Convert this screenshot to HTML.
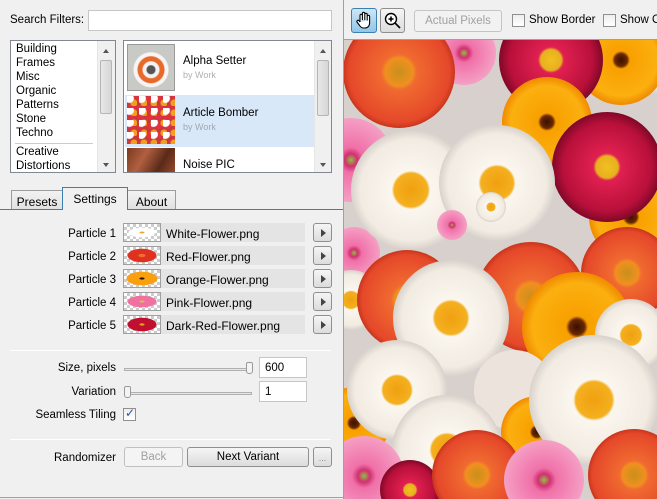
<!DOCTYPE html>
<html><head><meta charset="utf-8"><style>
*{box-sizing:border-box}
body{margin:0;width:657px;height:499px;background:#f0f0f0;font-family:"Liberation Sans",sans-serif;font-size:11px;color:#000;position:relative;overflow:hidden}
.a{position:absolute}
.box{position:absolute;background:#fff;border:1px solid #adadad}
.li{position:absolute;left:5px;font-size:11.5px}
.sb{position:absolute;background:#f0f0f0;border-left:1px solid #e6e6e6}
.thumbv{position:absolute;left:2px;width:12px;background:linear-gradient(90deg,#e8e8e8,#d6d6d6);border:1px solid #b5b5b5;border-radius:2px}
.lab{position:absolute;width:110px;text-align:right;left:6px;font-size:11.5px}
.tb{position:absolute;left:123px;width:38px;height:19px;border:1px solid #a0a0a0;background:repeating-conic-gradient(#ccc 0 25%,#fff 0 50%) 0 0/6px 6px}
.fn{position:absolute;left:161px;width:144px;height:19px;background:#e4e4e4;padding:4px 5px 0;font-size:12px}
.btn{position:absolute;border:1px solid #8e8f8f;border-radius:3px;background:linear-gradient(#f5f5f5,#dcdcdc);text-align:center}
.arr{position:absolute;left:313px;width:19px;height:19px}
.arr:after{content:"";position:absolute;left:7px;top:5px;border-left:5px solid #444;border-top:4px solid transparent;border-bottom:4px solid transparent}
.hr{position:absolute;left:10px;width:321px;height:1px;background:#a0a0a0;border-bottom:1px solid #fff}
.inp{position:absolute;left:259px;width:48px;height:21px;background:#fff;border:1px solid #c6c6c6;padding:4px 5px;font-size:11.5px}
.tab{position:absolute;top:190px;height:20px;border:1px solid #9c9c9c;border-bottom:none;background:linear-gradient(#f2f2f2,#e0e0e0);text-align:center;padding-top:4px;font-size:12px}
.cb{position:absolute;width:13px;height:13px;border:1px solid #8f8f8f;background:linear-gradient(#eee,#fff)}
</style></head><body>
<div class="a" style="left:10px;top:14px;font-size:11.5px">Search Filters:</div>
<div class="box" style="left:88px;top:10px;width:244px;height:21px;border-color:#c6c6c6"></div>

<div class="box" style="left:10px;top:40px;width:106px;height:133px;border-color:#828790">
 <div class="li" style="top:2px">Building</div><div class="li" style="top:16px">Frames</div><div class="li" style="top:30px">Misc</div><div class="li" style="top:44px">Organic</div><div class="li" style="top:58px">Patterns</div><div class="li" style="top:72px">Stone</div><div class="li" style="top:86px">Techno</div>
 <div class="a" style="left:4px;top:102px;width:78px;height:1px;background:#ccc"></div>
 <div class="li" style="top:105px">Creative</div><div class="li" style="top:119px">Distortions</div>
 <div class="sb" style="left:86px;top:0;width:18px;height:131px"><div class="a" style="left:5px;top:8px;border-bottom:4px solid #555;border-left:3px solid transparent;border-right:3px solid transparent"></div><div class="thumbv" style="top:19px;height:54px"></div><div class="a" style="left:5px;top:122px;border-top:4px solid #555;border-left:3px solid transparent;border-right:3px solid transparent"></div></div>
</div>

<div class="box" style="left:123px;top:40px;width:209px;height:133px;border-color:#828790;overflow:hidden">
 <div class="a" style="left:3px;top:3px;width:48px;height:47px;background:radial-gradient(circle at 50% 55%,#555 0 4px,#f2f2f2 5px 8px,#e8692a 9px 13px,#f5f5f5 14px 17px,#c9cac6 18px),#cfd0cc;border:1px solid #999"></div>
 <div class="a" style="left:59px;top:14px;font-size:11.5px">Alpha Setter</div><div class="a" style="left:59px;top:29px;font-size:9px;color:#b0b0b0">by Work</div>
 <div class="a" style="left:1px;top:54px;width:189px;height:52px;background:#d9e8f9"></div>
 <div class="a" style="left:3px;top:55px;width:48px;height:48px;background:radial-gradient(circle at 20% 20%,#fff 0 4px,transparent 5px) 0 0/12px 12px,radial-gradient(circle at 70% 70%,#f0a020 0 3px,transparent 4px) 0 0/10px 10px,radial-gradient(circle at 50% 30%,#e23040 0 3px,transparent 4px) 0 0/9px 9px,#c73a3a"></div>
 <div class="a" style="left:59px;top:66px;font-size:11.5px">Article Bomber</div><div class="a" style="left:59px;top:81px;font-size:9px;color:#a0a8b0">by Work</div>
 <div class="a" style="left:3px;top:107px;width:48px;height:30px;background:linear-gradient(120deg,#7a3a20,#b06040,#5a2a18,#a05030)"></div>
 <div class="a" style="left:59px;top:118px;font-size:11.5px">Noise PIC</div>
 <div class="sb" style="left:190px;top:0;width:18px;height:131px"><div class="a" style="left:5px;top:8px;border-bottom:4px solid #555;border-left:3px solid transparent;border-right:3px solid transparent"></div><div class="thumbv" style="top:19px;height:56px"></div><div class="a" style="left:5px;top:122px;border-top:4px solid #555;border-left:3px solid transparent;border-right:3px solid transparent"></div></div>
</div>

<div class="tab" style="left:11px;width:52px">Presets</div>
<div class="tab" style="left:127px;width:49px">About</div>
<div class="a" style="left:0;top:209px;width:343px;height:1px;background:#3c7fb1"></div>
<div class="tab" style="left:62px;top:187px;width:66px;height:23px;background:#f0f0f0;border-color:#3c7fb1;padding-top:4px">Settings</div>

<div class="lab" style="top:228px">Particle 1</div><div class="tb" style="top:223px;background:radial-gradient(ellipse 14px 5px,#f4a030 0 2px,#fff 3px 13px,transparent 14px),repeating-conic-gradient(#ccc 0 25%,#fff 0 50%) 0 0/6px 6px"></div><div class="fn" style="top:223px">White-Flower.png</div><div class="btn arr" style="top:223px"></div>
<div class="lab" style="top:251px">Particle 2</div><div class="tb" style="top:246px;background:radial-gradient(ellipse 15px 7px,#f07030 0 3px,#e03020 4px 14px,transparent 15px),repeating-conic-gradient(#ccc 0 25%,#fff 0 50%) 0 0/6px 6px"></div><div class="fn" style="top:246px">Red-Flower.png</div><div class="btn arr" style="top:246px"></div>
<div class="lab" style="top:274px">Particle 3</div><div class="tb" style="top:269px;background:radial-gradient(ellipse 16px 7px,#301000 0 2px,#f8a010 3px 15px,transparent 16px),repeating-conic-gradient(#ccc 0 25%,#fff 0 50%) 0 0/6px 6px"></div><div class="fn" style="top:269px">Orange-Flower.png</div><div class="btn arr" style="top:269px"></div>
<div class="lab" style="top:297px">Particle 4</div><div class="tb" style="top:292px;background:radial-gradient(ellipse 15px 6px,#c0d040 0 2px,#f070a0 3px 14px,transparent 15px),repeating-conic-gradient(#ccc 0 25%,#fff 0 50%) 0 0/6px 6px"></div><div class="fn" style="top:292px">Pink-Flower.png</div><div class="btn arr" style="top:292px"></div>
<div class="lab" style="top:320px">Particle 5</div><div class="tb" style="top:315px;background:radial-gradient(ellipse 15px 7px,#e0a020 0 2px,#c01030 3px 14px,transparent 15px),repeating-conic-gradient(#ccc 0 25%,#fff 0 50%) 0 0/6px 6px"></div><div class="fn" style="top:315px">Dark-Red-Flower.png</div><div class="btn arr" style="top:315px"></div>

<div class="hr" style="top:350px"></div>
<div class="lab" style="top:362px">Size, pixels</div>
<div class="a" style="left:124px;top:368px;width:128px;height:3px;border:1px solid #b0b0b0;background:#e6e6e6"></div>
<div class="a" style="left:246px;top:362px;width:7px;height:12px;border:1px solid #999;border-radius:2px 2px 3px 3px;background:#f4f4f4"></div>
<div class="inp" style="top:357px">600</div>
<div class="lab" style="top:386px">Variation</div>
<div class="a" style="left:124px;top:392px;width:128px;height:3px;border:1px solid #b0b0b0;background:#e6e6e6"></div>
<div class="a" style="left:124px;top:386px;width:7px;height:12px;border:1px solid #999;border-radius:2px 2px 3px 3px;background:#f4f4f4"></div>
<div class="inp" style="top:381px">1</div>
<div class="lab" style="top:409px">Seamless Tiling</div>
<div class="cb" style="left:123px;top:408px"><span class="a" style="left:1px;top:-3px;color:#3050a0;font-size:12px">✓</span></div>
<div class="hr" style="top:439px"></div>
<div class="lab" style="top:452px">Randomizer</div>
<div class="btn" style="left:124px;top:447px;width:59px;height:20px;color:#a0a0a0;border-color:#c0c0c0;background:#f4f4f4;padding-top:3px;font-size:11.5px">Back</div>
<div class="btn" style="left:187px;top:447px;width:122px;height:20px;padding-top:3px;font-size:11.5px">Next Variant</div>
<div class="btn" style="left:313px;top:447px;width:19px;height:20px;color:#888;font-size:9px;padding-top:5px">...</div>
<div class="a" style="left:0;top:497px;width:343px;height:1px;background:#a0a0a0"></div>
<div class="a" style="left:343px;top:0;width:1px;height:499px;background:#a0a0a0"></div>

<div class="btn" style="left:351px;top:8px;width:26px;height:25px;background:linear-gradient(#cde6f7,#92c6e8);border-color:#3c7fb1">
<svg width="24" height="23" viewBox="0 0 24 23" style="position:absolute;left:0;top:0"><path d="M8 13V6.5a1.2 1.2 0 0 1 2.4 0V11M10.4 11V4.5a1.2 1.2 0 0 1 2.4 0V11M12.8 11V5.5a1.2 1.2 0 0 1 2.4 0V11.5M15.2 11.5V7.5a1.2 1.2 0 0 1 2.4 0V14c0 3-2 5-4.5 5h-1.5c-2 0-3-1-4-2.5L5 13a1.2 1.2 0 0 1 2-1.3L8 13" fill="#fff" stroke="#000" stroke-width="1.1" stroke-linejoin="round"/></svg></div>
<div class="btn" style="left:380px;top:8px;width:25px;height:25px">
<svg width="23" height="23" viewBox="0 0 23 23" style="position:absolute;left:0;top:0"><circle cx="10" cy="10" r="5.5" fill="#fff" stroke="#000" stroke-width="1.4"/><path d="M14 14l5 5M7.5 10h5M10 7.5v5" stroke="#000" stroke-width="1.6"/></svg></div>
<div class="btn" style="left:414px;top:10px;width:88px;height:22px;color:#a0a0a0;border-color:#c4c4c4;background:#f2f2f2;padding-top:4px;font-size:11.5px">Actual Pixels</div>
<div class="cb" style="left:512px;top:14px"></div><div class="a" style="left:529px;top:14px;font-size:11.5px">Show Border</div>
<div class="cb" style="left:603px;top:14px"></div><div class="a" style="left:620px;top:14px;font-size:11.5px;white-space:nowrap;width:37px;overflow:hidden">Show Overlay</div>
<div class="a" style="left:344px;top:39px;width:313px;height:1px;background:#a0a0a0"></div>

<svg class="a" style="left:344px;top:40px" width="313" height="459" viewBox="344 40 313 459">
<defs>
<radialGradient id="w"><stop offset="0" stop-color="#f0a010"/><stop offset=".28" stop-color="#f4b020"/><stop offset=".32" stop-color="#fbf6ee"/><stop offset=".85" stop-color="#f1ebe2"/><stop offset="1" stop-color="#d8d2cc"/></radialGradient>
<radialGradient id="r"><stop offset="0" stop-color="#c8901a"/><stop offset=".25" stop-color="#f09020"/><stop offset=".32" stop-color="#f06a30"/><stop offset=".9" stop-color="#e5482a"/><stop offset="1" stop-color="#c8361c"/></radialGradient>
<radialGradient id="o"><stop offset="0" stop-color="#3a1000"/><stop offset=".14" stop-color="#6a2800"/><stop offset=".2" stop-color="#f8a000"/><stop offset=".8" stop-color="#fbb010"/><stop offset="1" stop-color="#f08a00"/></radialGradient>
<radialGradient id="d"><stop offset="0" stop-color="#f0c020"/><stop offset=".2" stop-color="#e8b020"/><stop offset=".25" stop-color="#e02050"/><stop offset=".8" stop-color="#b8103a"/><stop offset="1" stop-color="#800828"/></radialGradient>
<radialGradient id="p"><stop offset="0" stop-color="#90c040"/><stop offset=".15" stop-color="#d03070"/><stop offset=".3" stop-color="#f070a8"/><stop offset="1" stop-color="#f5a0c5"/></radialGradient>
</defs>
<rect x="344" y="40" width="313" height="459" fill="#d8d0cc"/>
<circle cx="464" cy="53" r="32" fill="url(#p)"/>
<circle cx="644" cy="57" r="38" fill="url(#w)"/>
<circle cx="621" cy="60" r="45" fill="url(#o)"/>
<circle cx="551" cy="60" r="52" fill="url(#d)"/>
<circle cx="351" cy="160" r="42" fill="url(#p)"/>
<circle cx="399" cy="72" r="56" fill="url(#r)"/>
<circle cx="547" cy="122" r="45" fill="url(#o)"/>
<circle cx="631" cy="217" r="42" fill="url(#o)"/>
<circle cx="607" cy="167" r="55" fill="url(#d)"/>
<circle cx="354" cy="253" r="26" fill="url(#p)"/>
<circle cx="411" cy="190" r="60" fill="url(#w)"/>
<circle cx="497" cy="183" r="58" fill="url(#w)"/>
<circle cx="491" cy="207" r="15" fill="url(#w)"/>
<circle cx="452" cy="225" r="15" fill="url(#p)"/>
<circle cx="627" cy="273" r="46" fill="url(#r)"/>
<circle cx="351" cy="300" r="30" fill="url(#w)"/>
<circle cx="407" cy="300" r="50" fill="url(#r)"/>
<circle cx="531" cy="297" r="55" fill="url(#r)"/>
<circle cx="577" cy="327" r="55" fill="url(#o)"/>
<circle cx="451" cy="318" r="58" fill="url(#w)"/>
<circle cx="631" cy="335" r="36" fill="url(#w)"/>
<circle cx="354" cy="423" r="36" fill="url(#o)"/>
<circle cx="514" cy="390" r="40" fill="#ece4dc"/>
<circle cx="537" cy="432" r="36" fill="url(#o)"/>
<circle cx="397" cy="390" r="50" fill="url(#w)"/>
<circle cx="594" cy="400" r="65" fill="url(#w)"/>
<circle cx="447" cy="450" r="55" fill="url(#w)"/>
<circle cx="364" cy="476" r="40" fill="url(#p)"/>
<circle cx="410" cy="490" r="30" fill="url(#d)"/>
<circle cx="477" cy="475" r="45" fill="url(#r)"/>
<circle cx="634" cy="475" r="46" fill="url(#r)"/>
<circle cx="544" cy="480" r="40" fill="url(#p)"/>
</svg>
</body></html>
